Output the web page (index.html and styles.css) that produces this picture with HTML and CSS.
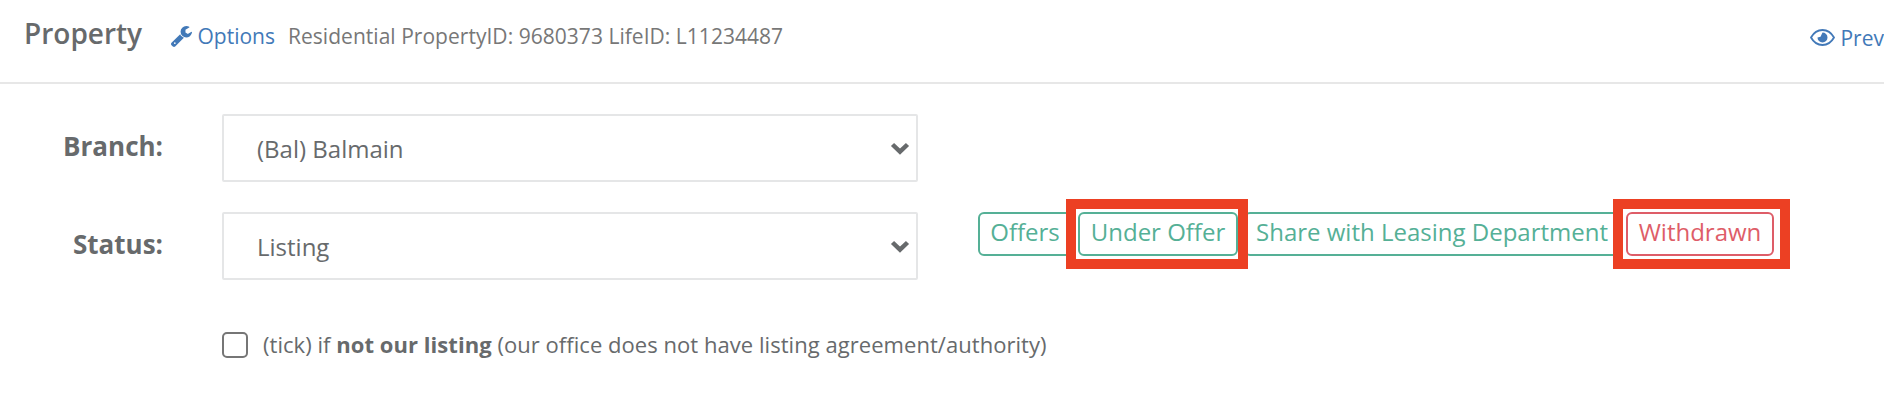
FILE: index.html
```html
<!DOCTYPE html>
<html lang="en">
<head>
    <meta charset="UTF-8">
    <meta name="viewport" content="width=device-width, initial-scale=1.0">
    <title>Property</title>
    <link rel="stylesheet" href="styles.css">
</head>
<body>
    <header class="page-header">
        <h1>Property</h1>
        <a href="#" class="options-link">
            <svg class="icon-wrench" viewBox="0 0 1641 1643" fill="currentColor"><path d="M363 1451q0-26-19-45t-45-19-45 19-19 45 19 45 45 19 45-19 19-45zm644-420l-682 682q-37 37-90 37-52 0-91-37l-106-108q-38-36-38-90 0-53 38-91l681-681q39 98 114.500 173.500t173.500 114.500zm634-435q0 39-23 106-47 134-164.500 217.500t-258.500 83.500q-185 0-316.500-131.500t-131.500-316.500 131.500-316.500 316.500-131.500q58 0 121.500 16.500t107.500 46.500q16 11 16 28t-16 28l-293 169v224l193 107q5-3 79-48.500t135.500-81 70.500-35.500q15 0 23.500 10t8.500 25z" transform="translate(0 -107)"/></svg>
            <span>Options</span>
        </a>
        <span class="property-ids">Residential PropertyID: 9680373 LifeID: L11234487</span>
        <a href="#" class="preview-link">
            <svg class="icon-eye" viewBox="0 0 25 17"><path class="eye-outline" d="M1 8.500 C3.500 4 7.500 1 12.500 1 S21.500 4 24 8.500 C21.500 13 17.500 16 12.500 16 S3.500 13 1 8.500Z"/><path class="eye-pupil" d="M12.500 3.500 A5 5 0 1 1 7.500 8.500 L10.500 7.800 Z"/></svg>
            <span>Preview</span>
        </a>
    </header>

    <form class="property-form">
        <div class="form-row">
            <label for="branch">Branch:</label>
            <div class="select-wrap">
                <select id="branch">
                    <option>(Bal) Balmain</option>
                </select>
                <svg class="chevron" viewBox="0 0 20 14"><path d="M2.500 2.500 L10 9.700 L17.500 2.500"/></svg>
            </div>
        </div>

        <div class="form-row">
            <label for="status">Status:</label>
            <div class="select-wrap">
                <select id="status">
                    <option>Listing</option>
                </select>
                <svg class="chevron" viewBox="0 0 20 14"><path d="M2.500 2.500 L10 9.700 L17.500 2.500"/></svg>
            </div>
            <div class="status-actions">
                <button type="button" class="btn btn-offers">Offers</button>
                <div class="marked marked-offer">
                    <button type="button" class="btn btn-under">Under Offer</button>
                </div>
                <button type="button" class="btn btn-share">Share with Leasing Department</button>
                <div class="marked marked-withdrawn">
                    <button type="button" class="btn btn-danger">Withdrawn</button>
                </div>
            </div>
        </div>

        <div class="check-row">
            <input type="checkbox" id="notOurs">
            <label for="notOurs">(tick) if <strong>not our listing</strong> (our office does not have listing agreement/authority)</label>
        </div>
    </form>
</body>
</html>
```

FILE: styles.css
```css
* {
    margin: 0;
    padding: 0;
    box-sizing: border-box;
}

body {
    font-family: "Open Sans", "Noto Sans", sans-serif;
    background: #fff;
    color: #676a6c;
    overflow: hidden;
}

a {
    color: #4279b8;
    text-decoration: none;
}

.page-header {
    display: flex;
    align-items: baseline;
    height: 84px;
    padding: 13px 0 0 24px;
    border-bottom: 2px solid #e7e7e7;
    font-size: 21px;
    line-height: 40px;
    white-space: nowrap;
}

h1 {
    width: 147px;
    font-size: 28px;
    font-weight: 600;
}

.options-link {
    width: 117px;
}

.icon-wrench {
    width: 21px;
    height: 21px;
    vertical-align: -3px;
}

.property-ids {
    color: #777;
    letter-spacing: 0.03px;
}

.preview-link {
    width: 74px;
    margin-left: auto;
    position: relative;
    top: 2px;
}

.icon-eye {
    width: 25px;
    height: 17px;
    vertical-align: 0;
}

.eye-outline {
    fill: none;
    stroke: currentColor;
    stroke-width: 1.800;
}

.eye-pupil {
    fill: currentColor;
}

.property-form {
    padding-top: 30px;
}

.form-row {
    display: flex;
    height: 68px;
    margin-bottom: 30px;
}

.form-row > label {
    width: 163px;
    margin-right: 59px;
    font-size: 26px;
    font-weight: 700;
    line-height: 64px;
    text-align: right;
}

.select-wrap {
    position: relative;
    width: 696px;
}

select {
    width: 100%;
    height: 68px;
    padding: 0 32px 0 33px;
    appearance: none;
    border: 2px solid #e5e6e7;
    border-radius: 2px;
    background: #fff;
    color: inherit;
    font-family: inherit;
    font-size: 24px;
}

.chevron {
    position: absolute;
    top: 27.5px;
    right: 8px;
    width: 20px;
    height: 14px;
    fill: none;
    stroke: #676a6c;
    stroke-width: 4.500;
}

.status-actions {
    display: flex;
    gap: 6px;
    margin-left: 60px;
}

.btn {
    height: 44px;
    border: 2px solid #55b096;
    border-radius: 6px;
    background: #fff;
    color: #55b096;
    font-family: inherit;
    font-size: 24px;
    line-height: 36px;
    padding-bottom: 4px;
    white-space: nowrap;
}

.btn-offers {
    width: 94px;
}

.btn-under {
    width: 160px;
}

.btn-share {
    width: 376px;
}

.btn-danger {
    width: 148px;
    border-color: #de5d68;
    color: #de5d68;
}

.marked {
    position: relative;
    height: 44px;
}

.marked::after {
    content: "";
    position: absolute;
    border: 10px solid #ec4023;
}

.marked-offer::after {
    inset: -13px -10px -13px -12px;
}

.marked-withdrawn::after {
    inset: -13px -16px -13px -13px;
}

.check-row {
    display: flex;
    align-items: center;
    height: 40px;
    margin-top: 45px;
    padding-left: 222px;
    font-size: 22px;
    letter-spacing: 0.045px;
}

.check-row label {
    padding-bottom: 2px;
}

.check-row input {
    width: 26px;
    height: 26px;
    margin-right: 15px;
    appearance: none;
    border: 2px solid #767676;
    border-radius: 5px;
}
```
